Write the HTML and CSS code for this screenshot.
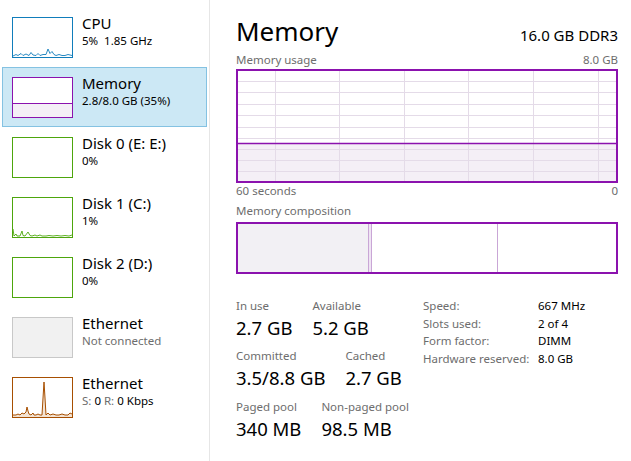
FILE: index.html
```html
<!DOCTYPE html>
<html>
<head>
<meta charset="utf-8">
<link rel="stylesheet" href="styles.css">
</head>
<body>
<div class="app">
  <nav class="sidebar">
    <div class="item">
      <div class="thumb thumb-cpu">
        <svg viewBox="0 0 59 39" preserveAspectRatio="none"><polyline class="ln-cpu" points="0,38 3,36.5 5,37.5 8,35.5 10,37.5 13,36 16,37.5 18,34.5 20,37 23,37.5 25,35.5 27,37.5 30,36.5 33,36.5 35,31 37,35.5 39,33.5 41,36.5 43,37.5 46,36.5 49,37.5 52,37.5 55,36.5 59,37.5"/></svg>
      </div>
      <div class="txt"><div class="t">CPU</div><div class="s">5%&nbsp; 1.85 GHz</div></div>
    </div>
    <div class="item selected">
      <div class="thumb thumb-mem">
        <div class="mem-fill"></div>
      </div>
      <div class="txt"><div class="t">Memory</div><div class="s">2.8/8.0 GB (35%)</div></div>
    </div>
    <div class="item">
      <div class="thumb thumb-disk"></div>
      <div class="txt"><div class="t">Disk 0 (E: E:)</div><div class="s">0%</div></div>
    </div>
    <div class="item">
      <div class="thumb thumb-disk">
        <svg viewBox="0 0 59 39" preserveAspectRatio="none"><polyline class="ln-disk" points="0,31 1,38 3,36 4,38 7,38 9,33 10,37.5 12,38 15,34 17,37.5 19,38 22,37 24,38 27,37 29,38 33,38 36,37.5 40,38 44,37.5 48,38 52,37.5 56,38 59,37"/></svg>
      </div>
      <div class="txt"><div class="t">Disk 1 (C:)</div><div class="s">1%</div></div>
    </div>
    <div class="item">
      <div class="thumb thumb-disk"></div>
      <div class="txt"><div class="t">Disk 2 (D:)</div><div class="s">0%</div></div>
    </div>
    <div class="item">
      <div class="thumb thumb-off"></div>
      <div class="txt"><div class="t">Ethernet</div><div class="s gray">Not connected</div></div>
    </div>
    <div class="item">
      <div class="thumb thumb-eth">
        <svg viewBox="0 0 59 39" preserveAspectRatio="none"><polygon class="fl-eth" points="0,39 0,37 3,37 5,36 7,37 9,35 11,36 13,34 14,29 15,33 16,36 18,37 20,35 21,37 23,37 25,36 27,37 29,37 30,20 31,4 32,20 33,37 35,35 37,37 40,36 43,37 46,37 49,36 52,37 55,37 57,35 59,36 59,39"/><polyline class="ln-eth" points="0,37 3,37 5,36 7,37 9,35 11,36 13,34 14,29 15,33 16,36 18,37 20,35 21,37 23,37 25,36 27,37 29,37 30,20 31,4 32,20 33,37 35,35 37,37 40,36 43,37 46,37 49,36 52,37 55,37 57,35 59,36"/></svg>
      </div>
      <div class="txt"><div class="t">Ethernet</div><div class="s"><span class="gray">S:</span> 0 <span class="gray">R:</span> 0 Kbps</div></div>
    </div>
  </nav>

  <main class="panel">
    <header class="head">
      <h1 class="title">Memory</h1>
      <div class="spec">16.0 GB DDR3</div>
    </header>
    <div class="caption"><span>Memory usage</span><span>8.0 GB</span></div>
    <div class="graph">
      <svg viewBox="0 0 382 114" preserveAspectRatio="none">
        <rect x="1" y="74" width="380" height="39" fill="#f4eff6"/>
        <g stroke="#e4dbe8" stroke-width="1">
          <line x1="1" y1="12.5" x2="381" y2="12.5"/>
          <line x1="1" y1="23.5" x2="381" y2="23.5"/>
          <line x1="1" y1="35.5" x2="381" y2="35.5"/>
          <line x1="1" y1="46.5" x2="381" y2="46.5"/>
          <line x1="1" y1="58.5" x2="381" y2="58.5"/>
          <line x1="1" y1="69.5" x2="381" y2="69.5"/>
          <line x1="1" y1="80.5" x2="381" y2="80.5"/>
          <line x1="1" y1="91.5" x2="381" y2="91.5"/>
          <line x1="1" y1="102.5" x2="381" y2="102.5"/>
          <line x1="39.5" y1="1" x2="39.5" y2="113"/>
          <line x1="103.5" y1="1" x2="103.5" y2="113"/>
          <line x1="168.5" y1="1" x2="168.5" y2="113"/>
          <line x1="232.5" y1="1" x2="232.5" y2="113"/>
          <line x1="297.5" y1="1" x2="297.5" y2="113"/>
          <line x1="362.5" y1="1" x2="362.5" y2="113"/>
        </g>
        <line x1="1" y1="74.5" x2="381" y2="74.5" stroke="#8b12ae" stroke-width="1.3"/>
        <rect x="1" y="1" width="380" height="112" fill="none" stroke="#8b12ae" stroke-width="2"/>
      </svg>
    </div>
    <div class="axis"><span>60 seconds</span><span>0</span></div>
    <div class="caption cap2"><span>Memory composition</span></div>
    <div class="comp">
      <svg viewBox="0 0 382 52" preserveAspectRatio="none">
        <rect x="1" y="1" width="131" height="50" fill="#f2f0f4"/>
        <rect x="132" y="1" width="4" height="50" fill="#efe4f3"/>
        <line x1="132.5" y1="1" x2="132.5" y2="51" stroke="#c9a6d6"/>
        <line x1="135.5" y1="1" x2="135.5" y2="51" stroke="#c9a6d6"/>
        <line x1="261.5" y1="1" x2="261.5" y2="51" stroke="#c9a6d6"/>
        <rect x="1" y="1" width="380" height="50" fill="none" stroke="#8b12ae" stroke-width="2"/>
      </svg>
    </div>
    <section class="stats">
      <div class="left">
        <div class="row">
          <div class="cell"><div class="lbl">In use</div><div class="val">2.7 GB</div></div>
          <div class="cell"><div class="lbl">Available</div><div class="val">5.2 GB</div></div>
        </div>
        <div class="row">
          <div class="cell"><div class="lbl">Committed</div><div class="val">3.5/8.8 GB</div></div>
          <div class="cell"><div class="lbl">Cached</div><div class="val">2.7 GB</div></div>
        </div>
        <div class="row">
          <div class="cell"><div class="lbl">Paged pool</div><div class="val">340 MB</div></div>
          <div class="cell"><div class="lbl">Non-paged pool</div><div class="val">98.5 MB</div></div>
        </div>
      </div>
      <dl class="props">
        <dt>Speed:</dt><dd>667 MHz</dd>
        <dt>Slots used:</dt><dd>2 of 4</dd>
        <dt>Form factor:</dt><dd>DIMM</dd>
        <dt>Hardware reserved:</dt><dd>8.0 GB</dd>
      </dl>
    </section>
  </main>
</div>
</body>
</html>
```
FILE: styles.css
```css
* { box-sizing: border-box; }
html, body {
  margin: 0;
  padding: 0;
  background: #ffffff;
}
body {
  font-family: "Noto Sans", "Open Sans", sans-serif;
  color: #000;
  width: 631px;
  height: 461px;
  overflow: hidden;
}
.app {
  display: flex;
  height: 461px;
}
.sidebar {
  width: 210px;
  flex: 0 0 210px;
  border-right: 1px solid #e6e6e6;
  padding-top: 7px;
}
.item {
  display: flex;
  align-items: flex-start;
  height: 60px;
  width: 205px;
  margin-left: 2px;
  border: 1px solid transparent;
  padding: 9px 0 0 9px;
}
.item.selected {
  background: #cce8f5;
  border-color: #84c2e2;
}
.thumb {
  width: 61px;
  height: 41px;
  flex: 0 0 61px;
  border: 1px solid;
  background: #fff;
  position: relative;
  overflow: hidden;
}
.thumb svg {
  display: block;
  width: 59px;
  height: 39px;
}
.thumb-cpu { border-color: #117dbb; }
.thumb-mem { border-color: #8b12ae; display: flex; flex-direction: column; justify-content: flex-end; }
.mem-fill {
  height: 14px;
  background: #f4eff6;
  border-top: 1px solid #8b12ae;
}
.thumb-disk { border-color: #4da60c; }
.thumb-off { border-color: #c8c8c8; background: #f1f1f1; }
.thumb-eth { border-color: #a74f01; }
.ln-cpu { fill: none; stroke: #117dbb; stroke-width: 0.9; }
.ln-disk { fill: none; stroke: #4da60c; stroke-width: 0.9; }
.ln-eth { fill: none; stroke: #a74f01; stroke-width: 1; }
.fl-eth { fill: #f3e3d3; }
.txt {
  margin-left: 9px;
  margin-top: -4.5px;
}
.t {
  font-size: 15px;
  line-height: 20px;
  white-space: nowrap;
}
.s {
  font-size: 11.5px;
  line-height: 16px;
  white-space: nowrap;
}
.gray { color: #6d6d6d; }

.panel {
  flex: 1;
  padding: 12.5px 13px 0 25px;
}
.head {
  display: flex;
  justify-content: space-between;
  align-items: baseline;
  height: 36px;
  padding-left: 1px;
}
.title {
  margin: 0;
  font-size: 26px;
  line-height: 36px;
  font-weight: 400;
}
.spec {
  font-size: 15px;
  line-height: 36px;
}
.caption, .axis, .graph, .comp, .stats {
  margin-left: 1px;
}
.caption, .axis {
  display: flex;
  justify-content: space-between;
  font-size: 11.5px;
  color: #6d6d6d;
}
.caption {
  line-height: 18px;
  margin-top: 2.5px;
}
.axis {
  line-height: 16px;
}
.cap2 {
  margin-bottom: 2.5px;
}
.graph, .comp {
  width: 382px;
}
.graph svg {
  display: block;
  width: 382px;
  height: 114px;
}
.comp svg {
  display: block;
  width: 382px;
  height: 52px;
}
.stats {
  display: flex;
  align-items: flex-start;
  margin-top: 22.75px;
}
.left {
  width: 187px;
  flex: 0 0 187px;
}
.row {
  display: flex;
  gap: 20px;
  margin-bottom: 6.5px;
}
.lbl {
  font-size: 11.5px;
  line-height: 18px;
  color: #6d6d6d;
  white-space: nowrap;
}
.val {
  font-size: 18.5px;
  line-height: 26px;
  white-space: nowrap;
}
.props {
  margin: 0;
  display: grid;
  grid-template-columns: 115px auto;
  align-content: start;
  font-size: 11.5px;
  line-height: 17.8px;
}
.props dt { color: #6d6d6d; white-space: nowrap; }
.props dd { margin: 0; white-space: nowrap; }
```
